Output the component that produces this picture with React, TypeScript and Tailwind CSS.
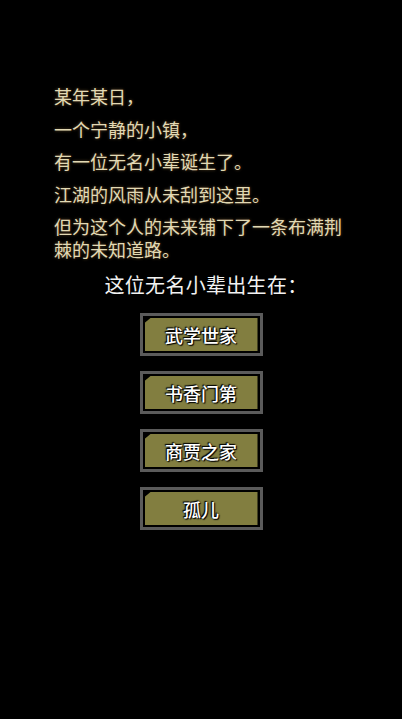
import React from "react";

const STORY = [
  "某年某日，",
  "一个宁静的小镇，",
  "有一位无名小辈诞生了。",
  "江湖的风雨从未刮到这里。",
  "但为这个人的未来铺下了一条布满荆棘的未知道路。",
];

const ORIGINS = ["武学世家", "书香门第", "商贾之家", "孤儿"];

function OriginButton({ label }: { label: string }) {
  return (
    <button className="block w-[123px] h-[43px] border-[3px] border-[#5b5b5b] bg-black p-[2px]">
      <div className="flex h-full w-full items-center justify-center bg-[#827e40] [clip-path:polygon(6px_0,100%_0,100%_100%,0_100%,0_5px)]">
        <span className="text-[18px] leading-none font-medium text-white [text-shadow:0_0_2px_#000,1px_1px_1px_#000,-1px_-1px_1px_#000]">
          {label}
        </span>
      </div>
    </button>
  );
}

export default function App() {
  return (
    <div
      className="h-[719px] w-[402px] overflow-hidden bg-black"
      style={{ fontFamily: '"Noto Sans CJK SC", "Noto Sans", sans-serif' }}
    >
      {/* Intro */}
      <div className="pl-[54px] pr-[50px] pt-[85px] flex flex-col gap-[9.5px]">
        {STORY.map((line) => (
          <p
            key={line}
            className="text-[18px] leading-[23px] text-[#e2d9b4] [text-shadow:0_0_3px_rgba(140,110,60,0.7)]"
          >
            {line}
          </p>
        ))}
      </div>

      <p className="mt-[11px] pl-[10px] text-center text-[20px] leading-[26px] tracking-[0.3px] text-[#f2f2f2]">
        这位无名小辈出生在：
      </p>

      {/* Choices */}
      <div className="mt-[15px] flex flex-col items-center gap-[15px]">
        {ORIGINS.map((o) => (
          <OriginButton key={o} label={o} />
        ))}
      </div>
    </div>
  );
}
